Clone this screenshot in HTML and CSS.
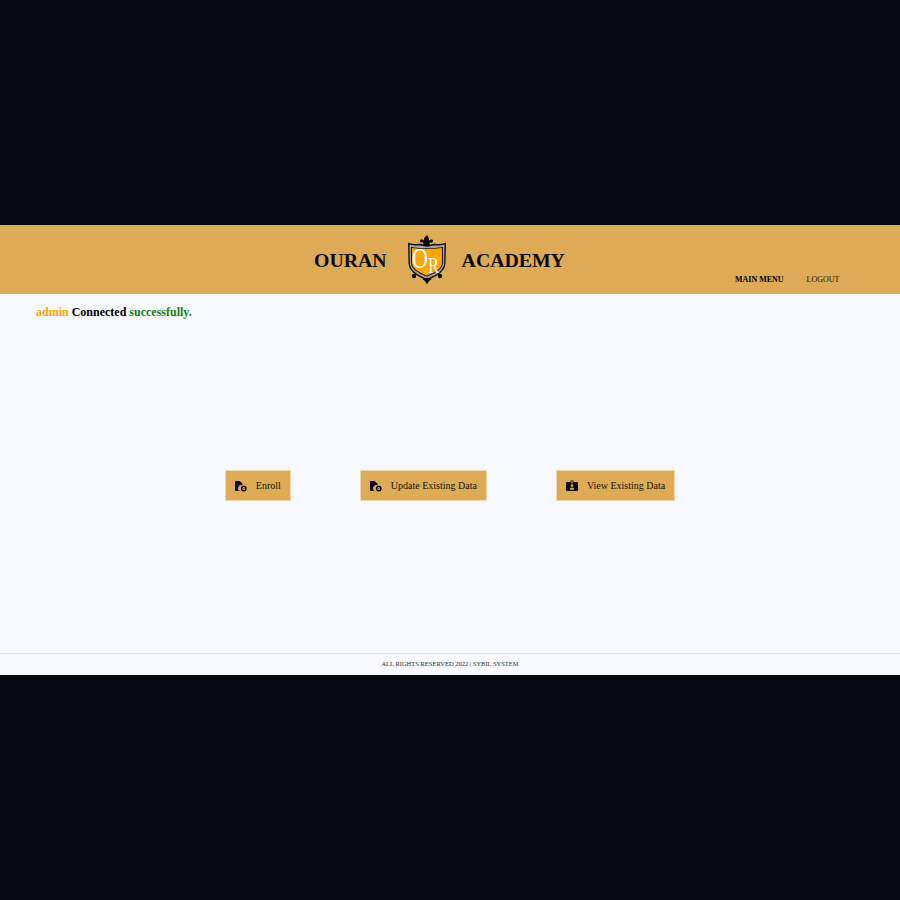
FILE: index.html
```html
<!DOCTYPE html>
<html lang="en">

<head>
  <meta charset="UTF-8">
  <meta name="viewport" content="width=device-width, initial-scale=1.0">
  <title>Ouran Academy</title>
  <link rel="stylesheet" href="styles.css">
</head>

<body>
  <div class="page">
    <header class="header">
      <div class="brand">
        <span class="brand-word">OURAN</span>
        <svg class="crest" width="40" height="50" viewBox="0 0 40 50">
          <!-- shield layers -->
          <path d="M1 7.500c4 1.500 8 1.800 11 1.300 3-.5 5 1.200 8 1.200s5-1.700 8-1.200c3 .5 7 .2 11-1.300l-.5 21c-.3 8-9 13-18.500 17-9.500-4-18.200-9-18.500-17z" fill="#15120d" />
          <path d="M2.500 9.500c3.500 1 7 1.300 9.500 1 3-.5 5 1.200 8 1.200s5-1.700 8-1.200c2.500.3 6 0 9.500-1l-.4 19c-.3 7-8 11.500-17.100 15.300-9.100-3.800-16.800-8.300-17.100-15.300z" fill="#a9a69f" />
          <path d="M4 12c5 .8 11 1.300 16 1.300s11-.5 16-1.300v16.300c-.2 5.700-7 9.800-16 13.500-9-3.700-15.800-7.800-16-13.500z" fill="#15120d" />
          <path d="M5 13c5 .7 10 1 15 1s10-.3 15-1v15.300c-.2 5.200-6.800 9-15 12.400-8.200-3.400-14.800-7.200-15-12.400z" fill="#ffa500" />
          <text class="crest-letters" x="5" y="24" transform="scale(1 1.380)">O<tspan class="crest-r" dy="3.600">R</tspan></text>
          <!-- fleur on top -->
          <path d="M20 0l1.800 3 .2 2.500c1-.8 2.500-1.500 3.500-.8 1 .7.5 2.300-.5 2.800h-2.500l.5 3h-7l.5-3h-2.500c-1-.5-1.500-2.100-.5-2.800 1-.7 2.500 0 3.500.8l.2-2.500z" fill="#0b0906" />
          <!-- feet -->
          <circle cx="7" cy="41" r="2.200" fill="#0b0906" />
          <circle cx="33" cy="41" r="2.200" fill="#0b0906" />
          <path d="M20 42.500l1.800 1.700 3.200-.4-2.700 2-2.300 3.500-2.300-3.500-2.700-2 3.200.4z" fill="#0b0906" />
        </svg>
        <span class="brand-word brand-word-last">ACADEMY</span>
      </div>
      <nav class="nav">
        <a class="nav-link nav-active" href="#">MAIN MENU</a>
        <a class="nav-link" href="#">LOGOUT</a>
      </nav>
    </header>

    <main class="main">
      <p class="status">
        <span class="status-user">admin</span> Connected <span class="status-ok">successfully.</span>
      </p>
      <div class="actions">
        <a class="action" href="#">
          <svg class="action-icon" width="12" height="12" viewBox="0 0 12 12">
            <path d="M0 1.800a.8.8 0 0 1 .8-.8h3.700l3 2.500v2a3 3 0 0 0-2.700 5.500h-4a.8.8 0 0 1-.8-.8z" fill="#0a0805" />
            <circle cx="8.800" cy="8.600" r="2.200" fill="none" stroke="#0a0805" stroke-width="1.400" />
            <circle cx="8.800" cy="8.600" r=".5" fill="#0a0805" />
          </svg>
          Enroll
        </a>
        <a class="action" href="#">
          <svg class="action-icon" width="12" height="12" viewBox="0 0 12 12">
            <path d="M0 1.800a.8.8 0 0 1 .8-.8h3.700l3 2.500v2a3 3 0 0 0-2.700 5.500h-4a.8.8 0 0 1-.8-.8z" fill="#0a0805" />
            <circle cx="8.800" cy="8.600" r="2.200" fill="none" stroke="#0a0805" stroke-width="1.400" />
            <circle cx="8.800" cy="8.600" r=".5" fill="#0a0805" />
          </svg>
          Update Existing Data
        </a>
        <a class="action" href="#">
          <svg class="action-icon" width="12" height="12" viewBox="0 0 12 12">
            <path fill-rule="evenodd" d="M1 2h3.500v-1.500h3v1.500h3.500a1 1 0 0 1 1 1v7a1 1 0 0 1-1 1h-10a1 1 0 0 1-1-1v-7a1 1 0 0 1 1-1zM5.300 1.300v2h1.400v-2zM6 4.300a1.300 1.300 0 1 0 0 2.600 1.300 1.300 0 0 0 0-2.600zM3.800 9.800h4.400c0-1.400-1-2.300-2.200-2.300s-2.200.9-2.200 2.300z" fill="#0a0805" />
          </svg>
          View Existing Data
        </a>
      </div>
    </main>

    <footer class="footer">ALL RIGHTS RESERVED 2022 | SYBIL SYSTEM</footer>
  </div>
</body>

</html>
```

FILE: styles.css
```css
html,
body {
  margin: 0;
  height: 100%;
}

body {
  background-color: #070a12;
  font-family: "Liberation Serif", "Times New Roman", serif;
  color: #000;
  padding: 225px 0;
  box-sizing: border-box;
}

.page {
  height: 450px;
  display: flex;
  flex-direction: column;
  background-color: #f8f9ff;
}

.header {
  height: 69px;
  flex-shrink: 0;
  display: grid;
  grid-template-columns: 1fr auto 1fr;
  background-color: #ddaa55;
}

.brand {
  grid-column: 2;
  display: flex;
  align-items: center;
  gap: 20px;
  padding: 1px 21px 0 0;
}

.brand-word {
  font-size: 19.800px;
  font-weight: bold;
  color: #0a0805;
}

.brand-word-last {
  margin-left: -5px;
}

.crest-letters {
  font-size: 22px;
  fill: #fff;
}

.crest-r {
  font-size: 16.500px;
}

.nav {
  grid-column: 3;
  justify-self: end;
  align-self: end;
  display: flex;
  gap: 23px;
  padding: 0 60.500px 9px 0;
}

.nav-link {
  font-size: 8px;
  line-height: 11px;
  color: #1a1408;
  text-decoration: none;
}

.nav-active {
  font-weight: bold;
  color: #000;
}

.main {
  flex: 1;
  display: flex;
  flex-direction: column;
}

.status {
  margin: 0;
  padding: 10px 0 0 36px;
  font-size: 12px;
  line-height: 16px;
  font-weight: bold;
}

.status-user {
  color: #ffa500;
}

.status-ok {
  color: #118011;
}

.actions {
  display: flex;
  justify-content: center;
  gap: 69px;
  margin-top: 150px;
}

.action {
  display: flex;
  align-items: center;
  gap: 9px;
  height: 31px;
  box-sizing: border-box;
  padding: 0 9px;
  background-color: #ddaa55;
  border: 1px solid #f0d9ae;
  font-size: 10px;
  color: #1a1408;
  text-decoration: none;
}

.action-icon {
  flex-shrink: 0;
}

.footer {
  height: 22px;
  flex-shrink: 0;
  box-sizing: border-box;
  border-top: 1px solid #fbe0b0;
  font-size: 6.500px;
  line-height: 20px;
  text-align: center;
  color: #333;
}
```
